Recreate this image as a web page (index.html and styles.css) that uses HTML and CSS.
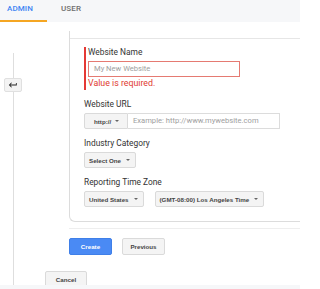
FILE: index.html
```html
<!DOCTYPE html>
<html>
<head>
<meta charset="utf-8">
<link rel="stylesheet" href="styles.css">
</head>
<body>
<div class="tabs">
  <div class="tab active">ADMIN</div>
  <div class="tab">USER</div>
</div>
<div class="main">
  <div class="rail">
    <div class="rail-seg top"></div>
    <button class="back" type="button">
      <svg width="10" height="10" viewBox="0 0 24 24"><path d="M19 7v4H5.83l3.58-3.59L8 6l-6 6 6 6 1.41-1.41L5.83 13H21V7z" fill="#222"/></svg>
    </button>
    <div class="rail-seg fill"></div>
  </div>
  <div class="content">
    <div class="inner">
      <div class="card">
        <div class="card-body">
          <div class="field error">
            <div class="label">Website Name</div>
            <div class="input err-input"><span class="ph">My New Website</span></div>
            <div class="err-msg">Value is required.</div>
          </div>
          <div class="field">
            <div class="label">Website URL</div>
            <div class="row">
              <div class="dd http">http://<span class="caret"></span></div>
              <div class="input url"><span class="ph">Example: http://www.mywebsite.com</span></div>
            </div>
          </div>
          <div class="field">
            <div class="label">Industry Category</div>
            <div class="row">
              <div class="dd">Select One<span class="caret"></span></div>
            </div>
          </div>
          <div class="field">
            <div class="label">Reporting Time Zone</div>
            <div class="row gap">
              <div class="dd">United States<span class="caret"></span></div>
              <div class="dd">(GMT-08:00) Los Angeles Time<span class="caret"></span></div>
            </div>
          </div>
        </div>
      </div>
      <div class="divider"></div>
      <div class="actions">
        <button class="btn primary" type="button">Create</button>
        <button class="btn" type="button">Previous</button>
      </div>
    </div>
    <div class="divider2"></div>
    <div class="cancel-row">
      <button class="btn" type="button">Cancel</button>
    </div>
  </div>
</div>
<div class="footer"></div>
</body>
</html>
```
FILE: styles.css
```css
* { box-sizing: border-box; }
html, body { margin: 0; padding: 0; }
body {
  width: 300px;
  height: 289px;
  overflow: hidden;
  background: #fff;
  font-family: Roboto, "Liberation Sans", Arial, sans-serif;
  color: #333;
  display: flex;
  flex-direction: column;
}
.tabs {
  height: 22px;
  background: #f6f7f9;
  display: flex;
  flex: none;
}
.tab {
  font-size: 8px;
  font-weight: 500;
  line-height: 17px;
  height: 22px;
  padding: 0 14px 0 14px;
  color: #6d6d6d;
  letter-spacing: 0.1px;
}
.tab.active {
  color: #4285f4;
  padding: 0 15px 0 7px;
  width: 47px;
  border-bottom: 2px solid #f5a623;
}
.main {
  flex: 1;
  display: flex;
  min-height: 0;
}
.rail {
  margin-left: 4px;
  width: 18px;
  padding-top: 31px;
  display: flex;
  flex-direction: column;
  align-items: center;
  flex: none;
}
.rail-seg {
  width: 1px;
  background: #dedede;
}
.rail-seg.top { height: 25px; }
.rail-seg.fill { flex: 1; }
.back {
  width: 18px;
  height: 14px;
  padding: 0;
  margin: 0;
  border: 1px solid #e0e0e0;
  border-radius: 2px;
  background: #f3f3f3;
  display: flex;
  align-items: center;
  justify-content: center;
}
.back svg { display: block; }
.content {
  flex: 1;
  margin-left: 23px;
  display: flex;
  flex-direction: column;
}
.inner {
  margin-left: 24px;
  margin-top: 9px;
}
.card {
  border-left: 1px solid #dcdcdc;
  border-bottom: 1px solid #dcdcdc;
  border-bottom-left-radius: 6px;
  padding-top: 7px;
}
.card-body {
  border-top: 1px solid #e6e6e6;
  padding: 8px 0 14px 14px;
}
.field { margin-bottom: 9px; }
.field:last-child { margin-bottom: 0; }
.field.error {
  border-left: 2px solid #e53935;
  padding-left: 2px;
  padding-bottom: 1px;
}
.label {
  font-size: 8.4px;
  line-height: 11px;
  margin-bottom: 3px;
  color: #333;
}
.input {
  height: 16px;
  border: 1px solid #dcdcdc;
  font-size: 7.6px;
  line-height: 14px;
  padding-left: 5px;
  background: #fff;
}
.err-input {
  width: 152px;
  border-color: #e57a72;
}
.ph { color: #9e9e9e; }
.err-msg {
  font-size: 8.8px;
  line-height: 11px;
  color: #e0392f;
  margin-top: 1px;
}
.row { display: flex; }
.row.gap { gap: 11px; }
.url {
  width: 152px;
  border-left: none;
}
.dd {
  height: 16px;
  display: flex;
  align-items: center;
  padding: 0 5px 0 4px;
  background: #f4f4f4;
  border: 1px solid #dadada;
  border-radius: 2px;
  font-family: "Liberation Sans", Arial, sans-serif;
  font-weight: bold;
  font-size: 6.2px;
  color: #444;
  white-space: nowrap;
}
.dd.http {
  padding: 0 13px 0 9px;
  border-radius: 2px 0 0 2px;
  width: 44px;
}
.caret {
  width: 0;
  height: 0;
  border-left: 2.5px solid transparent;
  border-right: 2.5px solid transparent;
  border-top: 2.5px solid #666;
  margin-left: 5px;
}
.dd.http .caret { margin-left: 4px; }
.divider {
  margin-top: 6px;
  height: 1px;
  background: #eeeeee;
}
.actions {
  margin-top: 9px;
  display: flex;
  gap: 10px;
}
.btn {
  height: 17px;
  width: 43px;
  padding: 0;
  margin: 0;
  border: 1px solid #dadada;
  border-radius: 2px;
  background: #f4f4f4;
  font-family: "Liberation Sans", Arial, sans-serif;
  font-weight: bold;
  font-size: 6.2px;
  color: #444;
}
.btn.primary {
  background: #4a8af4;
  border-color: #3f7fe8;
  color: #fff;
}
.divider2 {
  margin-top: 8px;
  height: 1px;
  background: #e0e0e0;
}
.cancel-row {
  margin-top: 4px;
}
.cancel-row .btn { width: 42px; }
.footer {
  height: 4px;
  background: #f6f7f9;
  flex: none;
}
```
